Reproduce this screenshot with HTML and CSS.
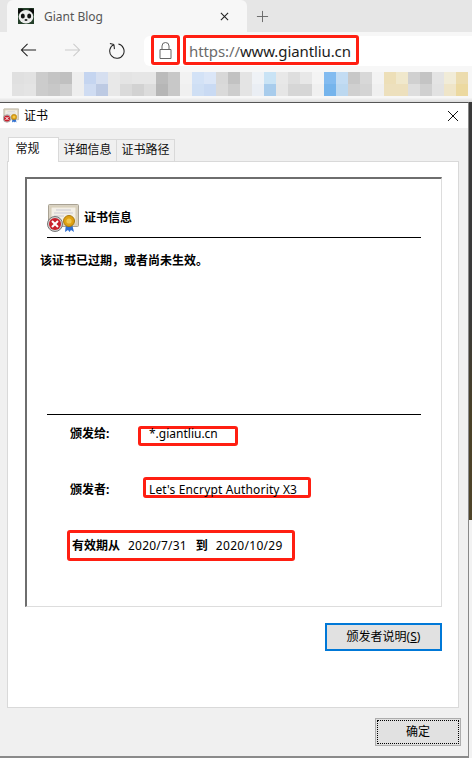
FILE: index.html
```html
<!DOCTYPE html>
<html lang="zh-CN">
  <head>
    <meta charset="UTF-8" />
    <meta name="viewport" content="width=device-width, initial-scale=1.0" />
    <title>证书</title>
    <link rel="stylesheet" href="styles.css">
  </head>
  <body>
    <svg class="defs" width="0" height="0">
      <symbol id="cert" viewBox="0 0 32 28">
        <rect x="1.5" y="0.5" width="30" height="22" rx="1" fill="#d9d2c3" stroke="#a9a293"/>
        <rect x="4" y="3" width="25" height="17" fill="#f3efe6" stroke="#d8cdb5"/>
        <path d="M9 6h15M7 9h19M7 12h10" stroke="#c9c9d2" fill="none"/>
        <path d="M19 20l-1 8 3-2 1.500 2 1.500-2 3 2-2-8z" fill="#2f6fd0"/>
        <circle cx="22" cy="17" r="5.500" fill="#dfa112" stroke="#a87a10"/>
        <circle cx="22" cy="17" r="2.600" fill="#f0c64c"/>
        <circle cx="8" cy="20" r="7.500" fill="#d0d0d0" stroke="#777"/>
        <circle cx="8" cy="20" r="6" fill="#c8202c"/>
        <path d="M5 17l6 6M11 17l-6 6" stroke="#fff" stroke-width="2" fill="none"/>
      </symbol>
    </svg>

    <header class="browser">
      <div class="tabstrip">
        <div class="tab">
          <svg class="favicon" viewBox="0 0 16 16">
            <rect width="16" height="16" fill="#25402a"/>
            <circle cx="2.800" cy="3.400" r="3" fill="#0c0c0c"/>
            <circle cx="13.200" cy="3.400" r="3" fill="#0c0c0c"/>
            <ellipse cx="8" cy="8.800" rx="7.400" ry="6.800" fill="#ececec"/>
            <ellipse cx="4.800" cy="8" rx="2" ry="2.500" fill="#111"/>
            <ellipse cx="11.200" cy="8" rx="2" ry="2.500" fill="#111"/>
            <ellipse cx="8" cy="12" rx="1.500" ry="1" fill="#222"/>
          </svg>
          <span class="tab-title">Giant Blog</span>
          <svg class="tab-close" viewBox="0 0 10 10"><path d="M1 1l8 8M9 1l-8 8" stroke="#222" stroke-width="1.2" fill="none"/></svg>
        </div>
        <svg class="new-tab" viewBox="0 0 14 14"><path d="M7 1v12M1 7h12" stroke="#666" stroke-width="1" fill="none"/></svg>
      </div>

      <div class="toolbar">
        <svg class="nav nav-back" viewBox="0 0 18 16"><path d="M17 8H1.500M8 1.500L1.500 8 8 14.500" stroke="#222" stroke-width="1.100" fill="none"/></svg>
        <svg class="nav nav-forward" viewBox="0 0 18 16"><path d="M1 8h15.500M10 1.500L16.500 8 10 14.500" stroke="#ccc" stroke-width="1.100" fill="none"/></svg>
        <svg class="nav nav-reload" viewBox="0 0 18 18"><path d="M6.300 2.200A7.600 7.600 0 1 0 11 1.700M6.300 2.200L6.800 7M6.300 2.200L2 1" stroke="#222" stroke-width="1.100" fill="none" transform="translate(0 .5)"/></svg>
        <div class="addressbar">
          <div class="mark mark-lock">
            <svg class="lock" viewBox="0 0 13 17"><path d="M3 7V4a3.500 3.500 0 0 1 7 0v3M1 7.500h11v9H1z" stroke="#666" stroke-width="1" fill="none"/></svg>
          </div>
          <div class="mark mark-url"><span class="scheme">https://</span>www.giantliu.cn</div>
        </div>
      </div>

      <div class="favbar">
        <svg class="mosaic" width="456" height="24" shape-rendering="crispEdges">
          <g>
            <rect x="0" width="12" height="12" fill="#e0e0e0"/><rect x="12" width="12" height="12" fill="#e2e2e2"/><rect x="24" width="12" height="12" fill="#ccc"/><rect x="36" width="12" height="12" fill="#c4c4c4"/><rect x="48" width="12" height="12" fill="#c0c0c0"/><rect x="60" width="12" height="12" fill="#eee"/><rect x="72" width="12" height="12" fill="#c5d5f0"/><rect x="84" width="12" height="12" fill="#d6dff0"/><rect x="96" width="12" height="12" fill="#e8e8e8"/><rect x="108" width="12" height="12" fill="#e4e4e4"/><rect x="120" width="12" height="12" fill="#e6e6e6"/><rect x="132" width="12" height="12" fill="#e6e6e6"/><rect x="144" width="12" height="12" fill="#bbb"/><rect x="156" width="12" height="12" fill="#c8c8c8"/><rect x="168" width="12" height="12" fill="#f2f2f2"/><rect x="180" width="12" height="12" fill="#d3e2f6"/><rect x="192" width="12" height="12" fill="#dbe6f7"/><rect x="204" width="12" height="12" fill="#d8d8d8"/><rect x="216" width="12" height="12" fill="#c2c2c2"/><rect x="228" width="12" height="12" fill="#e4e4e4"/><rect x="240" width="12" height="12" fill="#eff2f6"/><rect x="252" width="12" height="12" fill="#c9e3f5"/><rect x="264" width="12" height="12" fill="#e8e8e8"/><rect x="276" width="12" height="12" fill="#dedede"/><rect x="288" width="12" height="12" fill="#e8e8e8"/><rect x="300" width="12" height="12" fill="#f4f4f4"/><rect x="312" width="12" height="12" fill="#82bbf0"/><rect x="324" width="12" height="12" fill="#c3dcf3"/><rect x="336" width="12" height="12" fill="#c8c8c8"/><rect x="348" width="12" height="12" fill="#d8d8d8"/><rect x="360" width="12" height="12" fill="#f3f3f3"/><rect x="372" width="12" height="12" fill="#eddfb8"/><rect x="384" width="12" height="12" fill="#f0e8cc"/><rect x="396" width="12" height="12" fill="#d0d0d0"/><rect x="408" width="12" height="12" fill="#c4c4c4"/><rect x="420" width="12" height="12" fill="#e4e4e4"/><rect x="432" width="12" height="12" fill="#f1ecd8"/><rect x="444" width="12" height="12" fill="#ecdcae"/>
          </g>
          <g>
            <rect x="0" y="12" width="12" height="12" fill="#e2e2e2"/><rect x="12" y="12" width="12" height="12" fill="#e4e4e4"/><rect x="24" y="12" width="12" height="12" fill="#ccc"/><rect x="36" y="12" width="12" height="12" fill="#c8c8c8"/><rect x="48" y="12" width="12" height="12" fill="#d0d0d0"/><rect x="60" y="12" width="12" height="12" fill="#eee"/><rect x="72" y="12" width="12" height="12" fill="#cfdcf2"/><rect x="84" y="12" width="12" height="12" fill="#bdcae3"/><rect x="96" y="12" width="12" height="12" fill="#e8e8e8"/><rect x="108" y="12" width="12" height="12" fill="#dadada"/><rect x="120" y="12" width="12" height="12" fill="#d2d2d2"/><rect x="132" y="12" width="12" height="12" fill="#dcdcdc"/><rect x="144" y="12" width="12" height="12" fill="#b6b6b6"/><rect x="156" y="12" width="12" height="12" fill="#c8c8c8"/><rect x="168" y="12" width="12" height="12" fill="#f0f0f0"/><rect x="180" y="12" width="12" height="12" fill="#cfdff4"/><rect x="192" y="12" width="12" height="12" fill="#c9daf3"/><rect x="204" y="12" width="12" height="12" fill="#dadada"/><rect x="216" y="12" width="12" height="12" fill="#cdcdcd"/><rect x="228" y="12" width="12" height="12" fill="#e4e4e4"/><rect x="240" y="12" width="12" height="12" fill="#eaeef4"/><rect x="252" y="12" width="12" height="12" fill="#a8ccec"/><rect x="264" y="12" width="12" height="12" fill="#e6e6e6"/><rect x="276" y="12" width="12" height="12" fill="#d6d6d6"/><rect x="288" y="12" width="12" height="12" fill="#d6d6d6"/><rect x="300" y="12" width="12" height="12" fill="#f0f0f0"/><rect x="312" y="12" width="12" height="12" fill="#75b4ec"/><rect x="324" y="12" width="12" height="12" fill="#bcd8f0"/><rect x="336" y="12" width="12" height="12" fill="#d0d0d0"/><rect x="348" y="12" width="12" height="12" fill="#d4d4d4"/><rect x="360" y="12" width="12" height="12" fill="#f0f0f0"/><rect x="372" y="12" width="12" height="12" fill="#ede0bd"/><rect x="384" y="12" width="12" height="12" fill="#ede0bd"/><rect x="396" y="12" width="12" height="12" fill="#dedede"/><rect x="408" y="12" width="12" height="12" fill="#d0d0d0"/><rect x="420" y="12" width="12" height="12" fill="#e2e2e2"/><rect x="432" y="12" width="12" height="12" fill="#efe5c8"/><rect x="444" y="12" width="12" height="12" fill="#ecd9a0"/>
          </g>
        </svg>
      </div>
    </header>

    <div class="desktop">
      <main class="dialog">
        <div class="titlebar">
          <svg class="title-icon"><use href="#cert"/></svg>
          <span class="title-text">证书</span>
          <svg class="title-close" viewBox="0 0 12 12"><path d="M1 1l10 10M11 1L1 11" stroke="#111" stroke-width="1" fill="none"/></svg>
        </div>

        <div class="dialog-body">
          <div class="tabs">
            <div class="dtab dtab-active">常规</div>
            <div class="dtab">详细信息</div>
            <div class="dtab">证书路径</div>
          </div>

          <section class="panel">
            <div class="certbox">
              <div class="cert-head">
                <svg class="cert-icon"><use href="#cert"/></svg>
                <span class="cert-title">证书信息</span>
              </div>
              <p class="cert-warning">该证书已过期，或者尚未生效。</p>

              <div class="cert-fields">
                <div class="field field-to">
                  <span class="field-label">颁发给:</span>
                  <span class="mark mark-to">*.giantliu.cn</span>
                </div>
                <div class="field field-by">
                  <span class="field-label">颁发者:</span>
                  <span class="mark mark-by">Let's Encrypt Authority X3</span>
                </div>
                <div class="mark mark-valid">
                  <b>有效期从</b><span class="date-from">2020/7/31</span><b class="date-sep">到</b><span class="date-to">2020/10/29</span>
                </div>
              </div>
            </div>

            <div class="panel-actions">
              <button class="btn btn-focus" type="button">颁发者说明(<u>S</u>)</button>
            </div>
          </section>

          <div class="dialog-footer">
            <button class="btn btn-ok" type="button"><span class="btn-dots">确定</span></button>
          </div>
        </div>
      </main>

      <aside class="behind">
        <div class="behind-dark"></div>
        <div class="behind-light"></div>
      </aside>
    </div>
  </body>
</html>
```

FILE: styles.css
```css
* {
  box-sizing: border-box;
}
html,
body {
  margin: 0;
  padding: 0;
}
body {
  width: 472px;
  height: 758px;
  overflow: hidden;
  background: #f7f7f7;
  font-family: "Noto Sans", "Noto Sans CJK SC", sans-serif;
  font-size: 12px;
  color: #000;
}
.defs {
  display: block;
  position: absolute;
}

/* browser window */
.browser {
  height: 102px;
  background: #f7f7f7;
}
.tabstrip {
  display: flex;
  align-items: center;
  height: 32px;
  padding-left: 7px;
  background: #e6e6e6;
}
.tab {
  display: flex;
  align-items: center;
  width: 240px;
  height: 32px;
  padding: 0 11px;
  background: #f7f7f7;
  border-radius: 6px 6px 0 0;
}
.favicon {
  width: 16px;
  height: 16px;
}
.tab-title {
  margin-left: 10px;
  font-size: 12px;
  color: #555;
  flex: 1;
}
.tab-close {
  width: 9px;
  height: 9px;
  margin-right: 7px;
}
.new-tab {
  width: 13px;
  height: 13px;
  margin-left: 9px;
}
.toolbar {
  display: flex;
  height: 40px;
}
.nav {
  flex: none;
  margin-top: 10px;
}
.nav-back {
  width: 17px;
  height: 16px;
  margin-left: 20px;
}
.nav-forward {
  width: 17px;
  height: 16px;
  margin-left: 27px;
}
.nav-reload {
  width: 17px;
  height: 17px;
  margin-left: 27px;
}
.addressbar {
  display: flex;
  flex: 1;
  height: 30px;
  margin: 4px 0 0 19px;
  padding-left: 7px;
  gap: 3px;
  background: #fff;
  border-radius: 6px 0 0 6px;
}
.mark {
  border: 3px solid #ff1f12;
  border-radius: 3px;
}
.mark-lock {
  display: flex;
  align-items: center;
  justify-content: center;
  width: 29px;
  height: 30px;
  margin-top: -1px;
}
.lock {
  width: 13px;
  height: 17px;
}
.mark-url {
  width: 176px;
  height: 30px;
  margin-top: -1px;
  padding-left: 3px;
  font-size: 15px;
  letter-spacing: -0.1px;
  line-height: 26px;
  color: #1c1c1c;
  white-space: nowrap;
}
.scheme {
  color: #6b6b6b;
}
.favbar {
  height: 30px;
  padding-left: 12px;
  background: linear-gradient(#f7f7f7 85%, #dcdcdc);
}
.mosaic {
  display: block;
}

/* certificate dialog */
.desktop {
  display: flex;
  height: 656px;
}
.dialog {
  display: flex;
  flex-direction: column;
  width: 469px;
  border-top: 1px solid #555;
  border-right: 1px solid #888;
  border-bottom: 2px solid #8a8a8a;
}
.behind {
  display: flex;
  flex-direction: column;
  flex: 1;
}
.behind-dark {
  height: 418px;
  background: linear-gradient(#3a3a3a 50%, #4a4128 75%, #50452a);
}
.behind-light {
  flex: 1;
  background: #f2f2f2;
}
.titlebar {
  display: flex;
  align-items: center;
  height: 25px;
  padding-left: 3px;
  background: #fff;
}
.title-icon {
  width: 16px;
  height: 15px;
}
.title-text {
  margin: 0 0 2px 5px;
  font-size: 12px;
}
.title-close {
  width: 12px;
  height: 12px;
  margin-left: auto;
  margin-right: 9px;
}
.dialog-body {
  flex: 1;
  background: #f0f0f0;
}
.tabs {
  display: flex;
  align-items: flex-end;
  height: 33px;
  padding-left: 8px;
}
.dtab {
  width: 58px;
  height: 23px;
  margin-bottom: -1px;
  border: 1px solid #d9d9d9;
  border-left: 0;
  line-height: 20px;
  text-align: center;
  color: #111;
}
.dtab-active {
  position: relative;
  z-index: 1;
  width: 51px;
  height: 25px;
  border-left: 1px solid #d9d9d9;
  border-bottom: 0;
  padding-right: 12px;
  background: #fff;
  line-height: 21px;
}
.panel {
  width: 452px;
  height: 547px;
  margin-left: 7px;
  padding: 15px 0 0 17px;
  background: #fff;
  border: 1px solid #d9d9d9;
}
.certbox {
  width: 417px;
  height: 430px;
  border-top: 2px solid #6e6e6e;
  border-left: 2px solid #6e6e6e;
  border-right: 1px solid #ddd;
  border-bottom: 1px solid #ddd;
}
.cert-head {
  display: flex;
  align-items: center;
  height: 59px;
  margin: 0 20px;
  padding-top: 24px;
  padding-bottom: 5px;
  border-bottom: 1px solid #000;
}
.cert-icon {
  flex: none;
  width: 32px;
  height: 28px;
}
.cert-title {
  margin: 0 0 2px 5px;
  font-weight: 700;
}
.cert-warning {
  height: 161px;
  margin: 15px 0 0 13px;
  font-weight: 700;
  line-height: 16px;
}
.cert-fields {
  margin: 0 20px;
  border-top: 1px solid #000;
}
.field {
  display: flex;
  align-items: flex-start;
  padding-left: 23px;
  line-height: 16px;
}
.field-to {
  margin-top: 11px;
}
.field-by {
  margin-top: 31px;
}
.field-label {
  width: 68px;
  margin-top: 5px;
  font-weight: 700;
}
.field-to .field-label {
  margin-top: 0;
}
.mark-to {
  width: 100px;
  height: 20px;
  padding-left: 8px;
  line-height: 10px;
  white-space: nowrap;
}
.mark-by {
  width: 168px;
  height: 21px;
  margin-left: 5px;
  padding: 2px 0 0 3px;
  letter-spacing: 0.15px;
  white-space: nowrap;
}
.mark-valid {
  display: flex;
  align-items: center;
  width: 228px;
  height: 31px;
  margin: 32px 0 0 20px;
  padding: 0 0 1px 2px;
  white-space: nowrap;
}
.date-from {
  margin-left: 8px;
  letter-spacing: 0.2px;
}
.date-sep {
  margin-left: 9px;
}
.date-to {
  margin-left: 8px;
  letter-spacing: 0.3px;
}
.panel-actions {
  display: flex;
  justify-content: flex-end;
  width: 417px;
  margin-top: 16px;
}
.btn {
  display: block;
  padding: 0 0 2px;
  background: #e1e1e1;
  font-family: inherit;
  font-size: 12px;
  color: #000;
}
.btn-focus {
  width: 117px;
  height: 28px;
  border: 2px solid #0078d7;
}
.dialog-footer {
  display: flex;
  justify-content: flex-end;
  padding: 10px 7px 0 0;
}
.btn-ok {
  width: 86px;
  height: 28px;
  border: 1px solid #adadad;
  padding: 1px;
}
.btn-dots {
  display: flex;
  align-items: center;
  justify-content: center;
  height: 100%;
  padding-bottom: 2px;
  border: 1px dotted #000;
}
```
